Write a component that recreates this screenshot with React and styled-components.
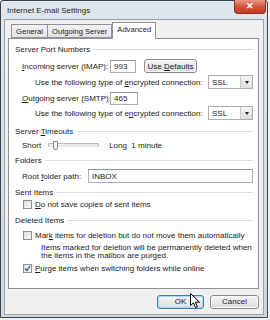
import React from 'react';
import styled, { createGlobalStyle } from 'styled-components';

const GlobalStyle = createGlobalStyle`
  html, body {
    margin: 0;
    padding: 0;
    background: #f2f2f2;
  }
  body {
    font-family: "Liberation Sans", Arial, sans-serif;
    font-size: 8px;
    color: #1b1b1b;
  }
`;

const Window = styled.div`
  position: relative;
  box-sizing: border-box;
  width: 268px;
  height: 318px;
  border: 1px solid #3d4145;
  border-radius: 3px 3px 0 0;
  background: linear-gradient(#dfe6ed, #cfd8e1);
  padding: 0 3px 2px 3px;
  display: flex;
  flex-direction: column;
`;

const TitleBar = styled.div`
  height: 19px;
  display: flex;
  align-items: center;
  padding-left: 3px;
  color: #1e1e1e;
  font-size: 8px;
`;

const CloseButton = styled.div`
  position: absolute;
  top: -1px;
  right: 1px;
  width: 30px;
  height: 13px;
  border: 1px solid #8e2f21;
  border-top: none;
  border-radius: 0 0 4px 4px;
  background: linear-gradient(#e99a86, #d4563f 50%, #c03b24);
  display: flex;
  align-items: center;
  justify-content: center;
  color: #fff;
  font-size: 9px;
  font-weight: bold;
  line-height: 1;
`;

const Body = styled.div`
  flex: 1;
  background: #f0f0f0;
  border: 1px solid #9aa3ad;
  display: flex;
  flex-direction: column;
  padding: 2px 4px 0 3px;
`;

const TabStrip = styled.div`
  display: flex;
  align-items: flex-end;
  height: 16px;
  padding-left: 3px;
  position: relative;
  z-index: 1;
`;

const Tab = styled.div`
  box-sizing: border-box;
  height: ${(p) => (p.$active ? '17px' : '14px')};
  margin-bottom: ${(p) => (p.$active ? '-1px' : '0')};
  padding: 0 4px;
  font-size: 7.6px;
  display: flex;
  align-items: center;
  border: 1px solid #8e9298;
  border-bottom: ${(p) => (p.$active ? 'none' : '1px solid #8e9298')};
  border-left: ${(p) => (p.$first || p.$active ? '1px solid #8e9298' : 'none')};
  background: ${(p) => (p.$active ? '#fff' : 'linear-gradient(#f2f2f2, #e3e3e3)')};
  padding-bottom: ${(p) => (p.$active ? '3px' : '0')};
`;

const Panel = styled.div`
  box-sizing: border-box;
  background: #fff;
  border: 1px solid #8e9298;
  height: 251px;
  padding: 3px 5px 0 6px;
  display: flex;
  flex-direction: column;
`;

const Legend = styled.div`
  height: 14px;
  margin-top: ${(p) => p.$gap || 0}px;
  display: flex;
  align-items: center;
  &::after {
    content: '';
    flex: 1;
    border-top: 1px solid #d6dde3;
    margin-left: 3px;
  }
`;

const Row = styled.div`
  height: ${(p) => p.$h}px;
  padding-left: ${(p) => p.$indent}px;
  display: flex;
  align-items: center;
  white-space: pre;
`;

const Label = styled.span`
  width: ${(p) => (p.$w ? `${p.$w}px` : 'auto')};
  flex-shrink: 0;
  white-space: pre;
`;

const Key = styled.span`
  text-decoration: underline;
  text-underline-offset: 1px;
`;

const Input = styled.div`
  box-sizing: border-box;
  width: ${(p) => p.$w}px;
  height: ${(p) => p.$h || 13}px;
  border: 1px solid #abadb3;
  border-top-color: #8f9399;
  background: #fff;
  display: flex;
  align-items: center;
  padding-left: 3px;
  margin-left: ${(p) => p.$ml || 0}px;
`;

const Button = styled.div`
  box-sizing: border-box;
  width: ${(p) => p.$w}px;
  height: 14px;
  margin-left: ${(p) => p.$ml || 0}px;
  border: 1px solid ${(p) => (p.$default ? '#3c7fb1' : '#8a8a8a')};
  border-radius: 3px;
  background: linear-gradient(#f6f6f6, #e9e9e9 50%, #dcdcdc);
  box-shadow: inset 0 0 0 1px ${(p) => (p.$default ? '#a8dcf6' : '#fbfbfb')};
  display: flex;
  align-items: center;
  justify-content: center;
  white-space: pre;
`;

const Select = styled.div`
  box-sizing: border-box;
  width: 45px;
  height: 14px;
  margin-left: auto;
  border: 1px solid #abadb3;
  background: #fff;
  display: flex;
  align-items: center;
  padding-left: 3px;
  justify-content: space-between;
`;

const DropArrow = styled.div`
  width: 11px;
  height: 12px;
  border-left: 1px solid #c7c9cc;
  background: linear-gradient(#f4f4f4, #dedede);
  display: flex;
  align-items: center;
  justify-content: center;
  &::after {
    content: '';
    border-left: 2.5px solid transparent;
    border-right: 2.5px solid transparent;
    border-top: 3px solid #222;
  }
`;

const Slider = styled.div`
  position: relative;
  width: 51px;
  height: 9px;
  margin: 0 10px 0 7px;
  display: flex;
  align-items: center;
  &::before {
    content: '';
    flex: 1;
    height: 2px;
    border: 1px solid #b8bcc0;
    border-bottom-color: #e6e6e6;
    background: #e7eaea;
  }
`;

const Thumb = styled.div`
  position: absolute;
  left: 5px;
  top: 0;
  width: 3px;
  height: 7px;
  border: 1px solid #8a9096;
  border-radius: 0 0 2px 2px;
  background: #eceeef;
`;

const Check = styled.div`
  box-sizing: border-box;
  width: 9px;
  height: 9px;
  border: 1px solid #8f8f8f;
  background: linear-gradient(135deg, #dcdcdc, #fafafa);
  margin-right: 3px;
  display: flex;
  align-items: center;
  justify-content: center;
`;

const Note = styled.div`
  padding-left: 26px;
  line-height: 8px;
  margin-top: 1px;
  white-space: nowrap;
`;

const Footer = styled.div`
  display: flex;
  justify-content: flex-end;
  align-items: center;
  height: 25px;
  position: relative;
`;

const Cursor = styled.svg`
  position: absolute;
  right: 58px;
  top: 4px;
`;

function Checkbox({ checked }) {
  return (
    <Check>
      {checked && (
        <svg width="7" height="7" viewBox="0 0 7 7">
          <path d="M1 3.5 L3 5.5 L6 1" fill="none" stroke="#3a5a8c" strokeWidth="1.3" />
        </svg>
      )}
    </Check>
  );
}

export default function App() {
  return (
    <>
      <GlobalStyle />
      <Window>
        <TitleBar>Internet E-mail Settings</TitleBar>
        <CloseButton>✕</CloseButton>
        <Body>
          <TabStrip>
            <Tab $first>General</Tab>
            <Tab>Outgoing Server</Tab>
            <Tab $active>Advanced</Tab>
          </TabStrip>
          <Panel>
            <Legend>Server Port Numbers</Legend>
            <Row $h={20} $indent={7}>
              <Label $w={88}><Key>I</Key>ncoming server (IMAP):</Label>
              <Input $w={26}>993</Input>
              <Button $w={53} $ml={8}>Use <Key>D</Key>efaults</Button>
            </Row>
            <Row $h={12} $indent={20}>
              <Label>Use the following type of <Key>e</Key>ncrypted connection:</Label>
              <Select>SSL<DropArrow /></Select>
            </Row>
            <Row $h={20} $indent={7}>
              <Label $w={88}><Key>O</Key>utgoing server (SMTP):</Label>
              <Input $w={28}>465</Input>
            </Row>
            <Row $h={10} $indent={20}>
              <Label>Use the following type of e<Key>n</Key>crypted connection:</Label>
              <Select>SSL<DropArrow /></Select>
            </Row>
            <Legend $gap={6}><Label>Server <Key>T</Key>imeouts</Label></Legend>
            <Row $h={14} $indent={7}>
              <Label>Short</Label>
              <Slider><Thumb /></Slider>
              <Label>Long  1 minute</Label>
            </Row>
            <Legend $gap={1}>Folders</Legend>
            <Row $h={18} $indent={7}>
              <Label $w={66}>Root <Key>f</Key>older path:</Label>
              <Input $w={167} $h={14}>INBOX</Input>
            </Row>
            <Legend>Sent Items</Legend>
            <Row $h={10} $indent={8}>
              <Checkbox />
              <Label><Key>D</Key>o not save copies of sent items</Label>
            </Row>
            <Legend $gap={4}>Deleted Items</Legend>
            <Row $h={16} $indent={8}>
              <Checkbox />
              <Label>Mar<Key>k</Key> items for deletion but do not move them automatically</Label>
            </Row>
            <Note>
              Items marked for deletion will be permanently deleted when
              <br />
              the items in the mailbox are purged.
            </Note>
            <Row $h={16} $indent={8}>
              <Checkbox checked />
              <Label><Key>P</Key>urge items when switching folders while online</Label>
            </Row>
          </Panel>
          <Footer>
            <Button $w={47} $default>OK</Button>
            <Button $w={49} $ml={6}>Cancel</Button>
            <Cursor width="11" height="16" viewBox="0 0 11 16">
              <path d="M0.5 0.5 L0.5 12.5 L3.5 9.8 L5.6 14.6 L7.4 13.8 L5.4 9.2 L9.5 9.2 Z" fill="#fff" stroke="#000" strokeWidth="1" />
            </Cursor>
          </Footer>
        </Body>
      </Window>
    </>
  );
}
